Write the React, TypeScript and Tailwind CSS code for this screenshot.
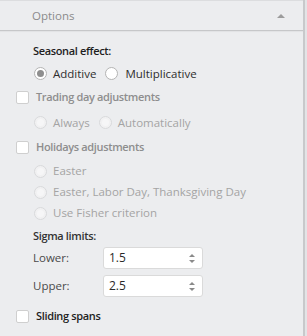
import React from 'react';

const Radio: React.FC<{ checked?: boolean; disabled?: boolean; className?: string }> = ({ checked, disabled, className = '' }) => {
  if (disabled) {
    return (
      <span className={`flex w-[13px] h-[13px] rounded-full border border-[#d9dadc] bg-[#f1f1f2] shrink-0 items-center justify-center ${className}`}>
        <span className="w-[7px] h-[7px] rounded-full bg-[#f6f6f7]" />
      </span>
    );
  }
  return (
    <span className={`flex w-[13px] h-[13px] rounded-full border border-[#b4b4b4] bg-white shrink-0 items-center justify-center ${className}`}>
      {checked && <span className="w-[7px] h-[7px] rounded-full bg-[#8e8e8e]" />}
    </span>
  );
};

const Checkbox: React.FC = () => (
  <span className="block w-[13px] h-[13px] rounded-[2px] border border-[#cfcfcf] bg-white shrink-0" />
);

const Spinner: React.FC<{ value: string }> = ({ value }) => (
  <div className="w-[100px] h-[22px] bg-white border border-[#dadada] rounded-[3px] flex items-center pl-[5px] pr-[7px]">
    <span className="flex-1 text-[#2a2a2a] text-[12px]">{value}</span>
    <span className="flex flex-col items-center gap-[3px]">
      <span className="w-0 h-0 border-l-[3px] border-r-[3px] border-b-[3px] border-l-transparent border-r-transparent border-b-[#8a8a8a]" />
      <span className="w-0 h-0 border-l-[3px] border-r-[3px] border-t-[3px] border-l-transparent border-r-transparent border-t-[#8a8a8a]" />
    </span>
  </div>
);

const bold = 'font-semibold text-[11px] tracking-[-0.35px]';

const App: React.FC = () => {
  return (
    <div
      className="w-[307px] h-[336px] flex bg-[#ecedef] overflow-hidden"
      style={{ fontFamily: '"Open Sans", "Noto Sans", sans-serif' }}
    >
      <div className="w-[303px] flex flex-col border-t border-[#dcdddf]">
        {/* Header */}
        <div className="h-[30px] flex items-center pl-[32px] pr-[18px] pt-[1px] border-b border-[#c6c7c9] shadow-[0_1px_1px_rgba(0,0,0,0.04)]">
          <span className="flex-1 text-[11.5px] text-[#8b8b8b]">Options</span>
          <span className="w-0 h-0 border-l-[4px] border-r-[4px] border-b-[4px] border-l-transparent border-r-transparent border-b-[#9c9c9c]" />
        </div>

        <div className="flex flex-col text-[11.5px]">
          <div className={`h-[21px] mt-[10px] flex items-center pl-[33px] text-[#1e1e1e] ${bold}`}>
            Seasonal effect:
          </div>
          <div className="h-[23px] flex items-center pl-[34px] text-[#2e2e2e]">
            <Radio checked />
            <span className="ml-[6px]">Additive</span>
            <Radio className="ml-[9px]" />
            <span className="ml-[7px]">Multiplicative</span>
          </div>
          <div className={`h-[25px] flex items-center pl-[16px] text-[#8e8e8e] ${bold}`}>
            <Checkbox />
            <span className="ml-[7px]">Trading day adjustments</span>
          </div>
          <div className="h-[25px] flex items-center pl-[34px] text-[#a4a4a4]">
            <Radio disabled />
            <span className="ml-[6px]">Always</span>
            <Radio disabled className="ml-[9px]" />
            <span className="ml-[6px]">Automatically</span>
          </div>
          <div className={`h-[25px] flex items-center pl-[16px] text-[#8e8e8e] ${bold}`}>
            <Checkbox />
            <span className="ml-[7px]">Holidays adjustments</span>
          </div>
          <div className="h-[22px] flex items-center pl-[34px] text-[#a4a4a4]">
            <Radio disabled />
            <span className="ml-[6px]">Easter</span>
          </div>
          <div className="h-[20px] flex items-center pl-[34px] text-[#a4a4a4]">
            <Radio disabled />
            <span className="ml-[6px]">Easter, Labor Day, Thanksgiving Day</span>
          </div>
          <div className="h-[22px] flex items-center pl-[34px] text-[#a4a4a4]">
            <Radio disabled />
            <span className="ml-[6px]">Use Fisher criterion</span>
          </div>
          <div className={`h-[20px] mt-[2px] flex items-center pl-[33px] text-[#333] ${bold}`}>
            Sigma limits:
          </div>
          <div className="h-[22px] mt-[1px] flex items-center pl-[33px] text-[#4a4a4a]">
            <span className="w-[70px]">Lower:</span>
            <Spinner value="1.5" />
          </div>
          <div className="h-[22px] mt-[6px] flex items-center pl-[33px] text-[#4a4a4a]">
            <span className="w-[70px]">Upper:</span>
            <Spinner value="2.5" />
          </div>
          <div className={`h-[20px] mt-[9px] flex items-center pl-[16px] text-[#1e1e1e] ${bold}`}>
            <Checkbox />
            <span className="ml-[7px]">Sliding spans</span>
          </div>
        </div>
      </div>
      <div className="w-[2px] bg-[#c8c9cb]" />
      <div className="w-[2px] bg-[#e3e4e6]" />
    </div>
  );
};

export default App;
